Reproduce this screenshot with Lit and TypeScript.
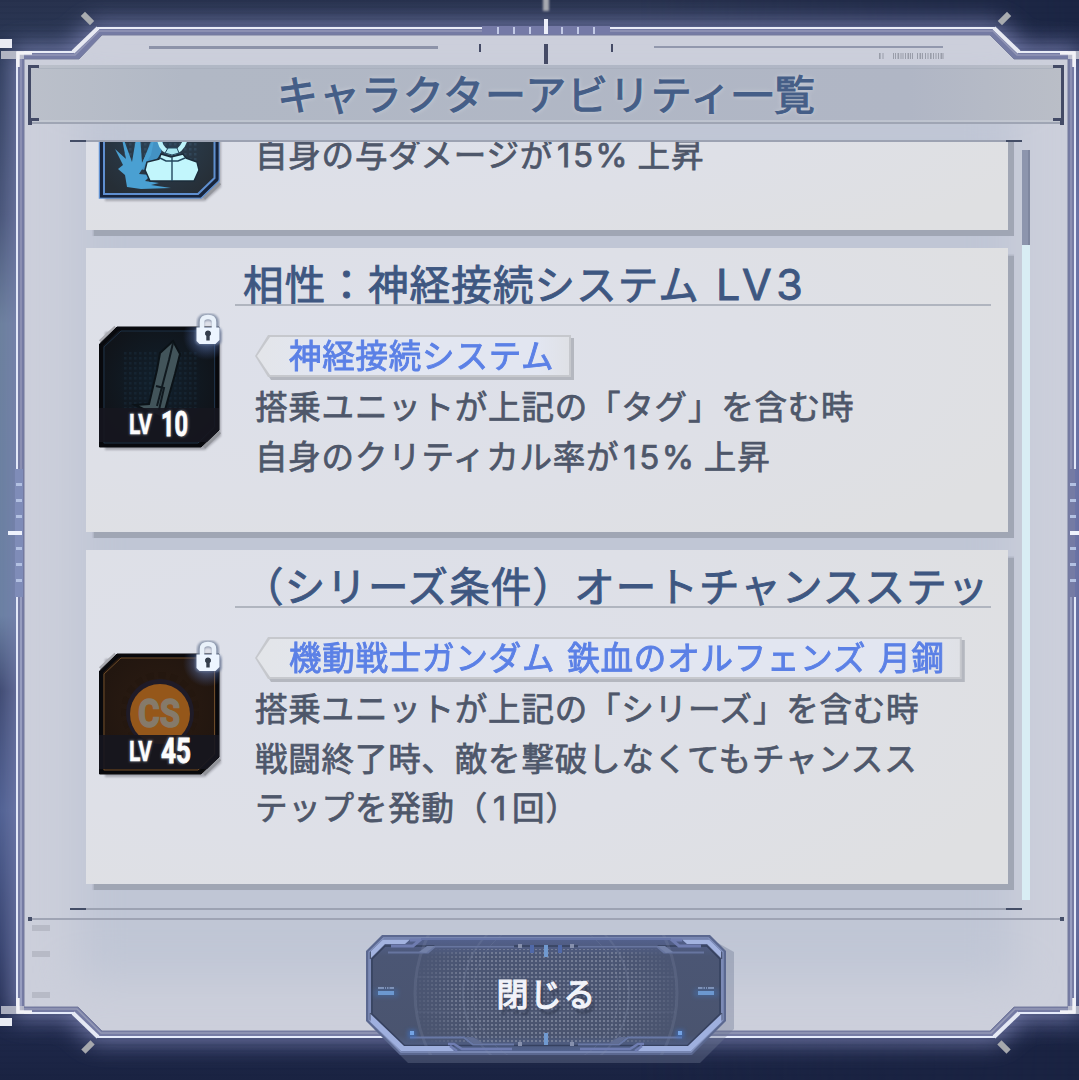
import { LitElement, html, svg, css, nothing } from "lit";
import { customElement, property } from "lit/decorators.js";

type IconKind = "burst" | "blade" | "cs";
interface Ability {
  icon: IconKind;
  level?: number;
  title?: unknown;
  tag?: string;
  lines: unknown[];
  size: string;
}

const num = (t: string) => html`<span class="num">${t}</span>`;

const ABILITIES: Ability[] = [
  { icon: "burst", size: "short", lines: [html`自身の与ダメージが${num("15%")}上昇`] },
  {
    icon: "blade", level: 10, size: "mid",
    title: html`相性：神経接続システム<span class="lv">LV3</span>`,
    tag: "神経接続システム",
    lines: ["搭乗ユニットが上記の「タグ」を含む時", html`自身のクリティカル率が${num("15%")}上昇`],
  },
  {
    icon: "cs", level: 45, size: "tall",
    title: "（シリーズ条件）オートチャンスステッ",
    tag: "機動戦士ガンダム 鉄血のオルフェンズ 月鋼",
    lines: [
      "搭乗ユニットが上記の「シリーズ」を含む時",
      "戦闘終了時、敵を撃破しなくてもチャンスス",
      html`テップを発動（<span class="one">1</span>回）`,
    ],
  },
];

@customElement("ability-icon")
class AbilityIcon extends LitElement {
  @property() kind: IconKind = "blade";
  @property({ type: Number }) level = 0;

  static styles = css`
    :host { display: block; width: 132px; height: 144px; }
    svg { display: block; overflow: visible; }
    text { font-family: Roboto, "Liberation Sans", sans-serif; font-weight: 700; }
  `;

  private art() {
    if (this.kind === "burst") {
      return svg`
        <path d="M41 106 L52 78 L58 62 L66 66 L62 90 L50 108Z" fill="#4392c4"/>
        <path d="M28 124 L26 112 L19 106 L24 102 L16 86 L27 96 L21 66 L33 99 L40 58 L43 100 L56 72 L52 92 L40 111 L52 112 L46 118 L60 120 L52 122 L72 125 L42 126Z" fill="#4aa0d2"/>
        <path d="M60 74 Q61 88 73 90 Q84 88 87 74" fill="none" stroke="#bdf4fb" stroke-width="4.500"/>
        <path d="M69 85 L78 85 L80 90 L73 92 L66 90Z" fill="#a8e6f0" stroke="#24485e"/>
        <path d="M62 91 L72 94 L84 91 L87 95 L98 99 L100 107 L95 118 L51 118 L46 107 L48 99 L60 96Z" fill="#c2f6fc" stroke="#1c2c3a" stroke-width="1.500"/>
        <path d="M73 94V118 M61 95L67 98H79L86 95" stroke="#24485e" stroke-width="1.400" fill="none"/>`;
    }
    if (this.kind === "blade") {
      return svg`
        <path d="M74 29 L81 42 L76 62 L66 98 L63 106 L36 93 L50 92 L58 58 L61 41Z" fill="#42545a" stroke="#0b1217" stroke-width="2"/>
        <path d="M74 31 L70 48 L58 94 M57 74 L65 76 L60 98" fill="none" stroke="#10191f" stroke-width="2"/>`;
    }
    return svg`
      <circle cx="61" cy="72" r="36" fill="none" stroke="#24170f" stroke-width="6" stroke-dasharray="7 5"/>
      <circle cx="61" cy="74" r="34" fill="#1f1b27"/>
      <circle cx="61" cy="75" r="30" fill="#95571a"/>
      <text x="39" y="88" font-size="39" textLength="42" lengthAdjust="spacingAndGlyphs" fill="#857a6a" stroke="#857a6a" stroke-width="1.500">CS</text>`;
  }

  render() {
    const k = this.kind;
    const blue = k === "burst";
    const line = blue ? "#5f8fd0" : k === "cs" ? "#6b4a28" : "#1d3045";
    return html`<svg width="132" height="144" viewBox="0 0 132 144">
      <defs>
        <radialGradient id="g" cx=".5" cy=".45" r=".6">
          <stop offset="0" stop-color=${blue ? "#2c4358" : k === "cs" ? "#2c1c12" : "#11202c"}></stop>
          <stop offset="1" stop-color=${blue ? "#262e36" : k === "cs" ? "#20150f" : "#101217"}></stop>
        </radialGradient>
        <pattern id="d" width="5" height="5" patternUnits="userSpaceOnUse"><rect width="2.5" height="2.5" fill=${blue ? "#40627c" : "#1c3446"} opacity=".35"></rect></pattern>
        <radialGradient id="lg"><stop offset="0" stop-color="#8fb0f0" stop-opacity=".75"></stop><stop offset="1" stop-color="#4a6ab8" stop-opacity="0"></stop></radialGradient>
        <filter id="b" x="-30%" y="-30%" width="160%" height="160%"><feGaussianBlur stdDeviation="1.2"></feGaussianBlur></filter>
        <clipPath id="c"><path d="M0.500 32 L18 15 H120 V118 L102 135 H0.500Z"></path></clipPath>
      </defs>
      <path d="M6 20 L122 20 V124 L106 138 H6Z" fill="#8e8f98" opacity=".7" filter="url(#b)"></path>
      <path d="M2 30.500 L17.500 16" stroke="#a9aab0" stroke-width="6"></path>
      <path d="M120 119 L104 134.500" stroke="#93959b" stroke-width="6"></path>
      <path d="M0.500 32 L18 15 H120 V118 L102 135 H0.500Z" fill="url(#g)" stroke=${blue ? "#5f8fd0" : "#07080c"} stroke-width=${blue ? 1.5 : 1}></path>
      ${k === "cs" ? nothing : svg`<rect x="24" y="38" width="76" height="60" fill="url(#d)"></rect>`}
      <path d="M2.500 33 L19 17 H118 V116 L101 133 H2.500Z" fill="none" stroke=${blue ? "#17243c" : "#08090d"} stroke-width="3"></path>
      <path d="M5 35 L22 19 H115.500 V115 L99 131 H5Z" fill="none" stroke=${line} stroke-width=${blue ? 2 : 1}></path>
      ${this.art()}
      ${this.level
        ? svg`
        <path d="M0 96 H120 V118 L108 130 H0Z" fill="#16161f" opacity=".9"/>
        <rect x="84" y="0" width="48" height="48" fill="url(#lg)" clip-path="url(#c)"/>
        <g fill="#9aa3b0" opacity=".6" filter="url(#b)">
          <text x="30" y="122" font-size="28" textLength="23" lengthAdjust="spacingAndGlyphs" stroke="#8a93a0" stroke-width="2">LV</text>
          <text x="62" y="124" font-size="35" textLength="28" lengthAdjust="spacingAndGlyphs" stroke="#8a93a0" stroke-width="2">${this.level}</text>
        </g>
        <g fill="#fdfdfd" stroke="#fdfdfd">
          <text x="30" y="122" font-size="28" textLength="23" lengthAdjust="spacingAndGlyphs" stroke-width=".4">LV</text>
          <text x="62" y="124" font-size="35" textLength=${this.level === 10 ? 27 : 30} lengthAdjust="spacingAndGlyphs" stroke-width=".8">${this.level}</text>
        </g>
        <g transform="translate(1.500 1)">
          <path d="M100 17 V10 Q100 4 107.500 4 Q115 4 115 10 V17" fill="none" stroke="#76839c" stroke-width="7" filter="url(#b)" opacity=".8"/>
          <rect x="95" y="14.500" width="26" height="17" rx="4" fill="#6d7c9c" filter="url(#b)" opacity=".8"/>
          <path d="M101.500 17 V9 Q101.500 4 107.500 4 Q113.500 4 113.500 9 V17" fill="none" stroke="#e9f1fa" stroke-width="4.500"/>
          <path d="M96 14.500 H119 V27 L115 31 H99 L96 28Z" fill="#edf5ff"/>
          <path d="M107.500 17.500 a3 3 0 0 1 1.700 5.500 V27.500 H105.800 V23 A3 3 0 0 1 107.500 17.500Z" fill="#343d4c"/>
        </g>`
        : nothing}
    </svg>`;
  }
}

@customElement("ability-card")
class AbilityCard extends LitElement {
  @property({ attribute: false }) ability!: Ability;

  static styles = css`
    :host { display: block; flex: none; }
    .card {
      box-sizing: border-box; display: flex; width: 922px;
      background: radial-gradient(ellipse 80% 90% at 28% 38%, #dde0ea 0%, #dee0e7 55%, #dfe0e2 100%);
      box-shadow: 5.5px 5.5px 1px #a0a6b4;
    }
    .short { height: 178px; }
    .mid { height: 284px; }
    .tall { height: 334px; }
    .side { width: 149px; flex: none; display: flex; align-items: center; padding-left: 13px; box-sizing: border-box; }
    ability-icon { margin-top: -13px; }
    .main { display: flex; flex-direction: column; align-items: flex-start; width: 756px; }
    .title {
      box-sizing: border-box; width: 756px; height: 58px; padding: 0 0 0 8px; border-bottom: 2px solid #b0b5bf;
      font-size: 40.5px; letter-spacing: 1.15px; line-height: 69px; color: #3e5781;
      -webkit-text-stroke: 0.9px #3e5781; white-space: nowrap; overflow: visible;
    }
    .lv { font-family: Inter, sans-serif; font-size: 43px; letter-spacing: 4.6px; margin-left: 16px; }
    .tag {
      margin: 29px 0 0 20px; display: grid; height: 42px;
      filter: drop-shadow(3px 3px 0.5px #b4b7bf);
    }
    .edge, .face { grid-area: 1 / 1; clip-path: polygon(13px 0, 100% 0, 100% 100%, 13px 100%, 0 50%); }
    .edge { background: #c6c8cd; }
    .face {
      margin: 2px; padding: 0 15px 0 32px; background: linear-gradient(90deg, #e3e5e9, #e2e6f1 20%, #e2e6f1 90%, #dfe1e6);
      font-size: 32.5px; letter-spacing: 0.78px; word-spacing: 4px; line-height: 33px; color: #5b80e6;
      -webkit-text-stroke: 0.9px #5b80e6; white-space: nowrap;
    }
    .lines { padding: 5px 0 0 20px; font-size: 32.5px; letter-spacing: 0.8px; color: #4e576a; -webkit-text-stroke: 0.75px #4e576a; }
    .short .lines { padding-top: 78px; }
    .line { height: 49.5px; line-height: 46px; white-space: nowrap; }
    .num, .one { display: inline-block; font-family: Inter, sans-serif; }
    .num { width: 84.5px; font-size: 33px; letter-spacing: 2.4px; text-indent: 4px; }
    .one { width: 24px; text-align: center; }
  `;

  render() {
    const a = this.ability;
    return html`<div class="card ${a.size}">
      <div class="side"><ability-icon .kind=${a.icon} .level=${a.level ?? 0}></ability-icon></div>
      <div class="main">
        ${a.title ? html`<div class="title">${a.title}</div>` : nothing}
        ${a.tag ? html`<div class="tag"><div class="edge"></div><div class="face">${a.tag}</div></div>` : nothing}
        <div class="lines">${a.lines.map((l) => html`<div class="line">${l}</div>`)}</div>
      </div>
    </div>`;
  }
}

@customElement("close-button")
class CloseButton extends LitElement {
  static styles = css`
    :host { display: block; }
    button {
      display: grid; place-items: center; width: 376px; height: 134px; padding: 0; border: 0; background: none;
      font-family: "Noto Sans CJK JP", sans-serif;
    }
    svg, span { grid-area: 1 / 1; }
    svg { display: block; overflow: visible; }
    span {
      position: relative; margin: -21px 15px 0 0; font-size: 32px; letter-spacing: 1.3px; line-height: 46px;
      color: #f1f3f9; -webkit-text-stroke: 1.3px #f1f3f9; text-shadow: 3px 6px 2px #2f374c99;
    }
  `;

  private half() {
    return svg`
      <path d="M17 4.500 H44 L39 9 H19 L5 23 V16Z" fill="#a3b3e0"/>
      <path d="M44 5 H54 L47 11 H25" fill="none" stroke="#6f7cb0" stroke-width="3"/>
      <path d="M55 4 H180" stroke="#6574a6" stroke-width="2"/>
      <path d="M22 17.500 H62 L69 11.500 H148" fill="none" stroke="#67759f" stroke-width="1.800"/>
      <path d="M53 17 L61 11 H69 L60 18Z" fill="#7381a8"/>
      <path d="M4.500 79 L38 111 H84 L88 116 H35 L4.500 87Z" fill="#9fb0df"/>
      <path d="M84 111 L91 116 M82 109 H88 L96 114 H146" fill="none" stroke="#6f7db2" stroke-width="2.500"/>
      <path d="M44 102.500 H98 L107 109.500 H148" fill="none" stroke="#6878a6" stroke-width="2"/>
      <path d="M99 102 L108 109 H118 L107 102Z" fill="#606d93"/>
      <path d="M4 24 V78" stroke="#7c8ab6" stroke-width="2"/>
      <rect x="12" y="52" width="6" height="2" fill="#8595b8"/><path d="M19.500 52v2M21.500 52v2M23 52v2" stroke="#8595b8"/><rect x="24" y="52" width="4" height="2" fill="#8595b8"/>
      <rect x="8" y="54" width="24" height="8" fill="#4576b8" opacity=".4" filter="url(#bb)"/>
      <rect x="12" y="56" width="16" height="4" fill="#6c98d0"/>
      <rect x="42" y="95" width="8" height="8" fill="#3d76cf" opacity=".6" filter="url(#bb)"/>
      <rect x="44" y="96" width="4" height="4" fill="#74a3e4"/>
      <rect x="152" y="9" width="4" height="4" fill="#8690ad"/><rect x="152" y="107" width="4" height="4" fill="#8690ad"/>
      <rect x="164" y="10" width="4" height="8" fill="#5069a9"/>
      <path d="M51 42 H180 M51 77 H180" stroke="#6a7591" opacity=".3"/>`;
  }

  render() {
    return html`<button>
      <svg width="376" height="134" viewBox="0 0 376 134">
        <defs>
          <pattern id="dots" width="4" height="4" patternUnits="userSpaceOnUse"><rect x="1" y="1" width="2" height="2" fill="#8b93a8"></rect></pattern>
          <radialGradient id="fade"><stop offset="0" stop-color="#fff"></stop><stop offset=".65" stop-color="#fff" stop-opacity=".85"></stop><stop offset="1" stop-color="#fff" stop-opacity="0"></stop></radialGradient>
          <mask id="m"><rect x="44" y="-34" width="272" height="188" fill="url(#fade)"></rect></mask>
          <filter id="bb" x="-60%" y="-60%" width="220%" height="220%"><feGaussianBlur stdDeviation="2"></feGaussianBlur></filter>
          <linearGradient id="body" x1="0" y1="0" x2="0" y2="1"><stop offset="0" stop-color="#53618e"></stop><stop offset=".16" stop-color="#4b5674"></stop><stop offset=".85" stop-color="#4a546f"></stop><stop offset="1" stop-color="#52638f"></stop></linearGradient>
          <clipPath id="cp"><path d="M16 0 H344 L360 16 V86 L326 120 H34 L0 86 V16Z"></path></clipPath>
        </defs>
        <path transform="translate(8 8)" d="M16 0 H344 L360 9 V86 L326 120 H34 L0 86 V16Z" fill="#6f7892" opacity=".38"></path>
        <path d="M16 0 H344 L360 16 V86 L326 120 H34 L0 86 V16Z" fill="#5b6890"></path>
        <path d="M17.500 3 H342.500 L357 17 V85 L325 117 H35 L3 85 V17Z" fill="url(#body)" stroke="#8291bd" stroke-width="1.300"></path>
        <path d="M6 24 L19 11 H341 L354 24 V79 L321.500 110.500 H38.500 L6 79Z" fill="none" stroke="#36415f" stroke-width="1.500"></path>
        <g clip-path="url(#cp)">
          <rect x="50" y="14" width="260" height="94" fill="url(#dots)" opacity=".7" mask="url(#m)"></rect>
          <g fill="none" stroke="#8793b0" opacity=".2">
            <circle cx="180" cy="58" r="131" stroke-width="3"></circle><circle cx="180" cy="58" r="83" stroke-width="2"></circle><circle cx="180" cy="58" r="73"></circle>
          </g>
        </g>
        <g>${this.half()}</g>
        <g transform="translate(360 0) scale(-1 1)">${this.half()}</g>
        <rect x="178" y="10" width="4" height="12" fill="#7099cf"></rect><rect x="178" y="98" width="4" height="12" fill="#7099cf"></rect>
      </svg>
      <span>閉じる</span>
    </button>`;
  }
}

@customElement("app-root")
class AppRoot extends LitElement {
  static styles = css`
    :host {
      display: block; position: relative; width: 1079px; height: 1080px; overflow: hidden;
      font-family: "Noto Sans CJK JP", sans-serif; background: #26304f;
    }
    .backdrop { position: absolute; inset: 0; display: block; }
    .page { position: relative; display: flex; flex-direction: column; height: 1080px; box-sizing: border-box; padding-top: 65px; }
    h1 {
      margin: 0; height: 75px; flex: none; text-align: center; font-weight: 400; font-size: 41px; letter-spacing: 0.9px;
      line-height: 54px; padding-left: 14px; color: #455e87; -webkit-text-stroke: 1.1px #455e87; text-shadow: 0 0 5px #d3d7df;
    }
    .rule { flex: none; height: 2px; width: 952px; margin-left: 70px; background: linear-gradient(90deg, #434d66 16px, #9ca2b2 16px 936px, #434d66 936px); }
    .body { display: flex; height: 766px; flex: none; }
    .list { width: 936px; margin-left: 86px; overflow: hidden; display: flex; flex-direction: column; gap: 18px; }
    .list ability-card:first-child { margin-top: -90px; }
    .bar { width: 8px; height: 750px; margin-top: 8px; background: #d9edf4; }
    .thumb { width: 8px; height: 95px; background: linear-gradient(90deg, #8d95ad 6px, #7f879f 6px); }
    .footer { margin: 7px 0 0 28px; width: 1036px; height: 4px; flex: none; background: linear-gradient(90deg, #454e68 4px, transparent 4px 1032px, #454e68 1032px), linear-gradient(#0000 1px, #9fa4b4 1px 3px, #0000 3px); }
    close-button { margin: 14px 0 0 366px; }
  `;

  private edgeHalf() {
    return svg`
      <path d="M482 28 H98 L73 52 H17" fill="none" stroke="#e9ecf7" stroke-width="2"/>
      <path d="M98 28 L73 52" stroke="#e7e9f2" stroke-width="4"/>
      <path d="M482 31 H99 L75 55 H21 V469" fill="none" stroke="#9296b6" stroke-width="1.500"/>
      <path d="M17 52 V469 M17 597 V1013" stroke="#e3e8f8" stroke-width="2"/>
      <path d="M21 597 V1010" stroke="#a3a9c9" stroke-width="1.500"/>
      <path d="M17 1013 H73 L98 1037 H545" fill="none" stroke="#e5ebfb" stroke-width="2"/>
      <path d="M73 1013 L98 1037" stroke="#e5e9f4" stroke-width="4"/>
      <path d="M24 1009 H77 L101 1033 H545" fill="none" stroke="#9499b5" stroke-width="1.500"/>
      <rect x="0" y="39" width="12" height="9" fill="#e9ebf3"/><rect x="0" y="1018" width="12" height="8" fill="#e9ecf4"/>
      <rect x="1" y="51" width="23" height="8" fill="#c7c9d4" opacity=".85"/><rect x="1" y="1006" width="23" height="8" fill="#bfc2cf" opacity=".85"/>
      <path d="M32 53 H18 V67 M18 998 V1012 H32" fill="none" stroke="#f2f2f7" stroke-width="3.500"/>
      <rect x="8" y="531" width="14" height="4" fill="#eef2fc"/>
      ${[483, 499, 515, 547, 563, 579].map((y) => svg`<rect x="16" y=${y} width="6" height="3" fill="#b3c1e2"/>`)}
      <rect x="-6.500" y="-3" width="13" height="6" transform="translate(87.500 18.500) rotate(45)" fill="#a9acb0"/>
      <rect x="-6.500" y="-3" width="13" height="6" transform="translate(88 1047) rotate(-45)" fill="#a6a8ad"/>
      <rect x="479" y="44" width="2" height="8" fill="#454b66"/>
      ${[497, 513, 529].map((x) => svg`<rect x=${x} y="27" width="2" height="7" fill="#c3cae6"/>`)}
      <path d="M39 66.500 H29.500 V119.500 H39" fill="none" stroke="#434a66" stroke-width="3"/>
      <rect x="28" y="121" width="4" height="4" fill="#434a66"/>`;
  }

  render() {
    const panel = "M24 59 H79 L102 35 H990 L1014 59 H1068 V1007 H1014 L990 1031 H102 L78 1007 H24Z";
    const outer = "M17 52 H73 L98 28 H994 L1019 52 H1075 V1013 H1019 L994 1037 H98 L73 1013 H17Z";
    const bars = [879, 882.5, 893, 895, 897.500, 900.500, 902.500, 905, 907.500, 910, 912, 917, 919.500, 922, 925, 927.500, 930, 933, 935.500, 938, 940.500, 942.500];
    return html`
      <svg class="backdrop" width="1079" height="1080" viewBox="0 0 1079 1080">
        <defs>
          <linearGradient id="bg" x1="0" y1="0" x2="0" y2="1">
            <stop offset="0" stop-color="#28324e"></stop><stop offset=".06" stop-color="#2c3a58"></stop><stop offset=".2" stop-color="#435172"></stop><stop offset=".3" stop-color="#6a809a"></stop>
            <stop offset=".57" stop-color="#6880a0"></stop><stop offset=".64" stop-color="#39456b"></stop><stop offset=".75" stop-color="#4b5d8e"></stop><stop offset=".88" stop-color="#2f3c66"></stop><stop offset=".94" stop-color="#1f294c"></stop><stop offset="1" stop-color="#1a2342"></stop>
          </linearGradient>
          <linearGradient id="rt" x1="0" y1="0" x2="0" y2="1"><stop offset=".02" stop-color="#1b2543"></stop><stop offset=".2" stop-color="#5a659a"></stop><stop offset=".85" stop-color="#4c5788"></stop><stop offset=".97" stop-color="#1a2342"></stop></linearGradient>
          <linearGradient id="rf"><stop offset="0" stop-color="#000"></stop><stop offset="1" stop-color="#fff"></stop></linearGradient>
          <mask id="rm"><rect x="640" width="439" height="1080" fill="url(#rf)"></rect></mask>
          <linearGradient id="hd"><stop offset="0" stop-color="#bbc0ca"></stop><stop offset=".15" stop-color="#b1b8c5"></stop><stop offset=".85" stop-color="#b0b6c5"></stop><stop offset="1" stop-color="#babec7"></stop></linearGradient>
          <filter id="gl" x="-10%" y="-10%" width="120%" height="120%"><feMorphology operator="dilate" radius="5"></feMorphology><feGaussianBlur stdDeviation="12"></feGaussianBlur></filter>
          <filter id="in" x="-10%" y="-10%" width="120%" height="120%"><feGaussianBlur stdDeviation="22"></feGaussianBlur></filter>
          <filter id="sm" x="-50%" y="-50%" width="200%" height="200%"><feGaussianBlur stdDeviation="1"></feGaussianBlur></filter>
          <clipPath id="pc"><path d=${panel}></path></clipPath>
          <pattern id="scan" width="6" height="6" patternUnits="userSpaceOnUse"><rect width="6" height="2" fill="#0a1330" opacity=".08"></rect></pattern>
        </defs>
        <rect width="1079" height="1080" fill="url(#bg)"></rect>
        <rect width="1079" height="1080" fill="url(#rt)" mask="url(#rm)"></rect>
        <path d=${outer} fill="#7c82b3" opacity=".92" filter="url(#gl)"></path>
        <rect width="1079" height="60" fill="url(#scan)"></rect>
        <rect y="1006" width="1079" height="74" fill="url(#scan)"></rect>
        <path d=${outer} fill="#757ba4"></path>
        <rect x="482" y="26" width="128" height="9" fill="#757aa7"></rect>
        <rect x="15" y="469" width="8" height="128" fill="#7f8cb8"></rect>
        <path d=${panel} fill="#cccfdb" stroke="#747a9c" stroke-width="1"></path>
        <g clip-path="url(#pc)"><rect x="76" y="90" width="940" height="890" fill="#c0c6d5" filter="url(#in)"></rect></g>
        <rect x="28" y="65" width="1036" height="59" fill="url(#hd)"></rect>
        <path d="M38 68.500 H1054" stroke="#a6adba" opacity=".6"></path>
        <path d="M32 121 H1060" stroke="#ccd1da"></path><path d="M32 123 H1060" stroke="#9fa5b4" stroke-width="2"></path>
        ${this.edgeHalf()}
        <g transform="translate(1092 0) scale(-1 1)">${this.edgeHalf()}</g>
        <rect x="149" y="46" width="289" height="3" fill="#8d93a9"></rect><rect x="654" y="46" width="289" height="2" fill="#9298ad"></rect>
        <rect x="544" y="44" width="4" height="20" fill="#454b66"></rect><rect x="544" y="19" width="4" height="15" fill="#eceffa"></rect>
        <rect x="543" y="-4" width="6" height="15" fill="#a7a9b0" filter="url(#sm)"></rect>
        ${bars.map((x, i) => svg`<rect x=${x} y="53" width=${i % 4 === 0 ? 1.600 : 1} height="6" fill="#999da9"/>`)}
        ${[925, 951, 992].map((y) => svg`<rect x="32" y=${y} width="18" height="6" fill="#b7bac6"/>`)}
      </svg>
      <div class="page">
        <h1>キャラクターアビリティ一覧</h1>
        <div class="rule"></div>
        <div class="body">
          <div class="list">${ABILITIES.map((a) => html`<ability-card .ability=${a}></ability-card>`)}</div>
          <div class="bar"><div class="thumb"></div></div>
        </div>
        <div class="rule"></div>
        <div class="footer"></div>
        <close-button></close-button>
      </div>`;
  }
}
